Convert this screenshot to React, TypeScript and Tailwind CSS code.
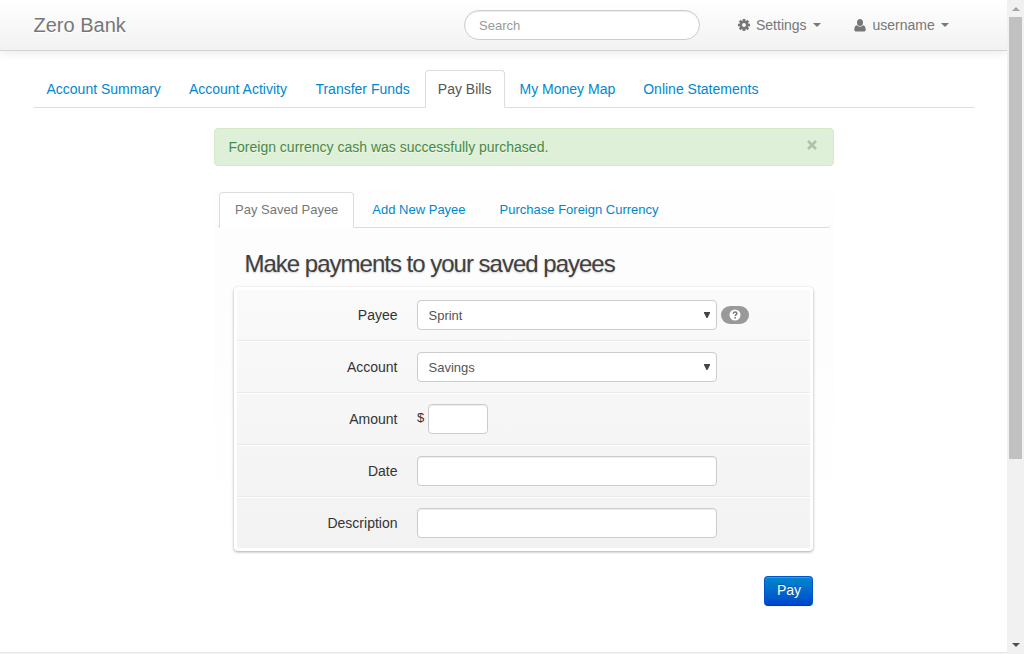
import React from "react";

const mainTabs = ["Account Summary", "Account Activity", "Transfer Funds", "Pay Bills", "My Money Map", "Online Statements"];
const payTabs = ["Pay Saved Payee", "Add New Payee", "Purchase Foreign Currency"];

const inputClass =
  "h-[30px] rounded-[4px] border border-[#ccc] bg-white shadow-[inset_0_1px_1px_rgba(0,0,0,0.075)] outline-none";

function Caret() {
  return <span className="ml-[6px] h-0 w-0 border-x-4 border-t-4 border-x-transparent border-t-[#777]" />;
}

function GearIcon() {
  return (
    <svg width="12" height="12" viewBox="0 0 12 12" className="mr-[6px] ml-px">
      <g fill="#777">
        <rect x="4.7" y="0" width="2.6" height="12" />
        <rect x="4.7" y="0" width="2.6" height="12" transform="rotate(45 6 6)" />
        <rect x="4.7" y="0" width="2.6" height="12" transform="rotate(90 6 6)" />
        <rect x="4.7" y="0" width="2.6" height="12" transform="rotate(135 6 6)" />
      </g>
      <circle cx="6" cy="6" r="3.2" fill="#fafafa" stroke="#777" strokeWidth="2.5" />
    </svg>
  );
}

function UserIcon() {
  return (
    <svg width="12" height="13" viewBox="0 0 12 13" className="mr-[7px]" fill="#777">
      <ellipse cx="6" cy="3.6" rx="3" ry="3.5" />
      <path d="M2.9 6.3C1 6.7.3 8.3.3 10.4c0 1.3.7 2.1 2 2.1h7.4c1.3 0 2-.8 2-2.1 0-2.1-.7-3.7-2.6-4.1C8.4 7.2 7.3 7.7 6 7.7S3.6 7.2 2.9 6.3z" />
    </svg>
  );
}

function Select({ value }: { value: string }) {
  return (
    <div className="flex h-[30px] w-[300px] items-center justify-between rounded-[4px] border border-[#ccc] bg-white pr-[6px] pl-[10.5px] text-[13px] text-[#555]">
      <span className="pt-px">{value}</span>
      <svg width="6" height="6" viewBox="0 0 6 6" className="mb-px" fill="#444">
        <path d="M0 0h6v1L3.5 6h-1L0 1z" />
      </svg>
    </div>
  );
}

function HelpBadge() {
  return (
    <span className="ml-1 flex h-[18px] w-7 items-center justify-center rounded-full bg-[#999]">
      <svg width="12" height="12" viewBox="0 0 12 12" fill="none">
        <circle cx="6" cy="6" r="5.5" fill="#fff" />
        <path d="M4.2 4.7C4.3 3.6 5 3 6.100 3c1.100 0 1.800.6 1.800 1.500C7.900 5.700 6.200 5.700 6.200 7" stroke="#777" strokeWidth="1.500" />
        <path d="M5.400 7.900h1.600v1.500H5.400z" fill="#777" />
      </svg>
    </span>
  );
}

function Row({ label, first, last, children }: { label: string; first?: boolean; last?: boolean; children: React.ReactNode }) {
  return (
    <div
      className={`flex items-center ${first ? "h-[51px]" : last ? "h-[51px] border-t border-white" : "h-[52px] border-t border-white"} ${
        last ? "pb-px" : "border-b border-b-[#eaeaea]"
      }`}
    >
      <label className="mr-[19.5px] w-[160.5px] text-right text-[14px]">{label}</label>
      {children}
    </div>
  );
}

export default function App() {
  return (
    <div className="flex h-[654px] w-[1024px] overflow-hidden bg-white font-['Liberation_Sans',Arial,sans-serif] text-[14px] leading-5 text-[#333]">
      <div className="flex w-[1007px] flex-col overflow-hidden">
        <header className="flex h-[51px] shrink-0 items-center border-b border-[#d4d4d4] bg-linear-to-b from-white to-[#f2f2f2] pl-[33.5px] text-[#777] shadow-[0_1px_10px_rgba(0,0,0,0.1)]">
          <span className="w-[430.5px] text-[20px] [text-shadow:0_1px_0_#fff]">Zero Bank</span>
          <input
            placeholder="Search"
            className="h-[30px] w-[236px] rounded-[15px] border border-[#ccc] bg-white px-[14px] text-[13px] shadow-[inset_0_1px_1px_rgba(0,0,0,0.075)] outline-none placeholder:text-[#999]"
          />
          <a className="ml-[37px] flex w-[117px] items-center">
            <GearIcon />
            <span>Settings</span>
            <Caret />
          </a>
          <a className="flex items-center">
            <UserIcon />
            <span className="-ml-[0.5px]">username</span>
            <Caret />
          </a>
        </header>

        <nav className="mt-[19px] ml-[34px] flex h-[38px] w-[940px] shrink-0 gap-[2px] border-b border-[#ddd]">
          {mainTabs.map((tab, i) => (
            <a
              key={tab}
              className={`h-[38px] rounded-t-[4px] border pt-2 ${i < 2 ? "pr-[12.5px] pl-[11.5px]" : "px-3"} ${
                tab === "Pay Bills" ? "border-[#ddd] border-b-white bg-white text-[#555]" : "border-transparent text-[#0088cc]"
              }`}
            >
              {tab}
            </a>
          ))}
        </nav>

        <main className="mt-5 ml-[214px] flex w-[620px] flex-col">
          <div className="flex h-[38px] items-center justify-between rounded-[4px] border border-[#d6e9c6] bg-[#dff0d8] pr-[16px] pl-[13.5px] text-[#468847] [text-shadow:0_1px_0_rgba(255,255,255,0.5)]">
            <span>Foreign currency cash was successfully purchased.</span>
            <svg width="10" height="10" viewBox="0 0 10 10" className="mb-1 opacity-20" stroke="#000" strokeWidth="2.6" role="img" aria-label="Close">
              <path d="M1 1l8 8M9 1L1 9" />
            </svg>
          </div>

          <section className="mt-[22px] bg-linear-to-b from-[#fefefe] via-[#fdfdfd] via-30% to-white px-[3px] pt-1">
            <nav className="flex h-9 gap-[2px] rounded-b-[4px] border-b border-[#ddd] pl-[2px] text-[13px]">
              {payTabs.map((tab, i) => (
                <a
                  key={tab}
                  className={`h-9 rounded-t-[4px] border px-[15px] pt-[7px] ${
                    i === 0 ? "border-[#ddd] border-b-white bg-white text-[#777]" : "border-transparent text-[#0088cc]"
                  }`}
                >
                  {tab}
                </a>
              ))}
            </nav>
            <h2 className="mt-[21px] ml-[27.5px] text-[24px] leading-[30px] tracking-[-1px] text-[#404040] [text-shadow:0_1px_2px_rgba(0,0,0,0.2)]">
              Make payments to your saved payees
            </h2>
            <div className="mt-2 ml-[17px] w-[579px] rounded-[4px] bg-white p-[3px] shadow-[0_1px_3px_rgba(0,0,0,0.35)]">
              <div className="rounded-[2px] bg-linear-to-b from-[#fafafa] to-[#f2f2f2]">
                <Row label="Payee" first>
                  <Select value="Sprint" />
                  <HelpBadge />
                </Row>
                <Row label="Account">
                  <Select value="Savings" />
                </Row>
                <Row label="Amount">
                  <span className="mr-1 w-[7px] pb-[3px] text-[13px]">$</span>
                  <input className={`${inputClass} w-[60px]`} />
                </Row>
                <Row label="Date">
                  <input className={`${inputClass} w-[300px]`} />
                </Row>
                <Row label="Description" last>
                  <input className={`${inputClass} w-[300px]`} />
                </Row>
              </div>
            </div>
          </section>
          <button className="mt-[25px] mr-[21px] h-[30px] w-[49px] self-end rounded-[4px] border border-[#0055cc] border-b-[#003ab3] bg-linear-to-b from-[#0088cc] to-[#0044cc] pb-[2px] pl-px text-[14px] text-white shadow-[inset_0_1px_0_rgba(255,255,255,0.2),0_1px_2px_rgba(0,0,0,0.05)] [text-shadow:0_-1px_0_rgba(0,0,0,0.25)]">
            Pay
          </button>
        </main>
        <footer className="mt-auto h-[2px] shrink-0 border-t border-[#e5e5e5] bg-[#f5f5f5]" />
      </div>

      <aside className="flex w-[17px] flex-col items-center bg-[#f1f1f1]">
        <span className="mt-[7px] h-0 w-0 border-x-4 border-b-4 border-x-transparent border-b-[#a3a3a3]" />
        <span className="mt-[6px] h-[442px] w-[13px] bg-[#c1c1c1]" />
        <span className="mt-auto mb-[7px] h-0 w-0 border-x-4 border-t-4 border-x-transparent border-t-[#505050]" />
      </aside>
    </div>
  );
}
